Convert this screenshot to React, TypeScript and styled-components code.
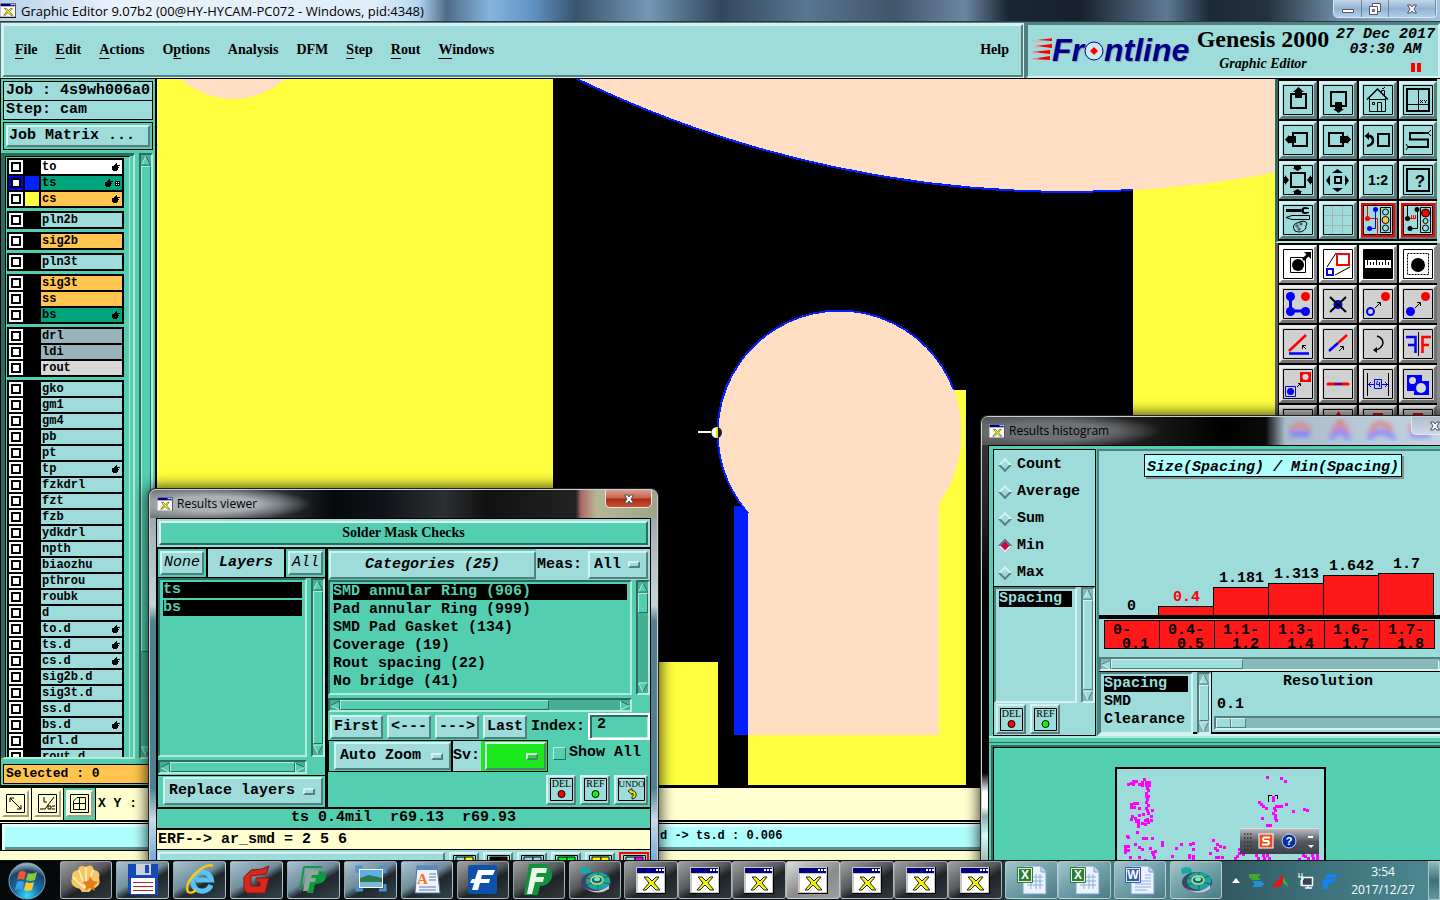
import React from "react";
import styled, { createGlobalStyle, css } from "styled-components";

/* ---------- palette ---------- */
const c = {
  cyan: "#9edbdb",
  cyanLight: "#d6f1f1",
  cyanDark: "#557f7f",
  cyanTrough: "#86b9b9",
  teal: "#54ceb0",
  tealLight: "#b4ecdc",
  tealDark: "#2c6c5e",
  tealTrough: "#47af96",
  cream: "#ffffcf",
  ice: "#b0ffff",
  orange: "#ffc54f",
  green: "#00a57e",
  yellow: "#ffff3f",
  peach: "#ffdec3",
  blue: "#0020ff",
  bar: "#ff1818",
};
const mono = `"Liberation Mono", monospace`;
const serif = `"Liberation Serif", serif`;
const sans = `"Open Sans", sans-serif`;

type Tone = "cyan" | "teal" | "grey" | "white" | "cream";
const tones: Record<Tone, { bg: string; hi: string; lo: string; trough: string }> = {
  cyan: { bg: c.cyan, hi: c.cyanLight, lo: c.cyanDark, trough: c.cyanTrough },
  teal: { bg: c.teal, hi: c.tealLight, lo: c.tealDark, trough: c.tealTrough },
  grey: { bg: "#d0d0d0", hi: "#ececec", lo: "#727272", trough: "#b0b0b0" },
  white: { bg: "#ffffff", hi: "#ffffff", lo: "#8a8a8a", trough: "#cccccc" },
  cream: { bg: c.cream, hi: "#ffffea", lo: "#a3a384", trough: "#dddd99" },
};
const raised = (t: Tone, w = 2) => css`
  background: ${tones[t].bg};
  border: ${w}px solid;
  border-color: ${tones[t].hi} ${tones[t].lo} ${tones[t].lo} ${tones[t].hi};
`;
const sunken = (t: Tone, w = 2) => css`
  background: ${tones[t].bg};
  border: ${w}px solid;
  border-color: ${tones[t].lo} ${tones[t].hi} ${tones[t].hi} ${tones[t].lo};
`;

const Global = createGlobalStyle`
  * { box-sizing: border-box; }
  body { margin: 0; background: #000; }
  button, input, select { font: inherit; color: inherit; margin: 0; padding: 0; border-radius: 0; }
  svg { display: block; }
`;

const Screen = styled.div`
  height: 100vh;
  overflow: hidden;
  display: flex;
  flex-direction: column;
  font: bold 15px/18px ${mono};
  color: #000;
`;
const Desktop = styled.div`
  position: relative;
  flex: 1;
  min-height: 0;
  overflow: hidden;
  display: flex;
  flex-direction: column;
  background: ${c.cream};
`;

/* ---------- title bar ---------- */
const TitleBar = styled.header`
  flex: none;
  height: 22px;
  display: flex;
  justify-content: space-between;
  background: linear-gradient(90deg, #b9d2ea 0, #e8f2fb 8%, #dfeefa 26%, #b6d6f2 29%, #4f6b88 31%, #86b4dc 34%, #5f93c4 37%, #39536c 40%, #7597b5 45%, #31485c 50%, #5a7690 56%, #40566a 62%, #6b86a0 67%, #1a2733 70%, #16212c 75%, #5e7a94 81%, #1c2a38 84%, #24323f 88%, #6f8ea8 93%, #a3c4e0 100%);
  border-bottom: 1px solid #2b3b46;
`;
const TitleText = styled.h1`
  display: flex;
  align-items: center;
  gap: 5px;
  margin: 0;
  font: 13px/20px ${sans};
`;
const CaptionButtons = styled.div`
  display: flex;
  height: 18px;
  margin-right: 3px;
  border: 1px solid #dbe9f5;
  border-top: 0;
  border-radius: 0 0 5px 5px;
  overflow: hidden;
  background: linear-gradient(#c3d6e8, #93b3d4 50%, #b0cfec);
`;
const CaptionButton = styled.button<{ $w: number }>`
  width: ${(p) => p.$w}px;
  border: 0;
  border-right: 1px solid #6b86a3;
  background: none;
  display: grid;
  place-items: center;
`;

/* ---------- header ---------- */
const Header = styled.div`
  flex: none;
  height: 57px;
  display: flex;
  background: ${c.cyanDark};
  border-top: 1px solid ${c.cyanDark};
  border-bottom: 1px solid #000;
`;
const MenuBar = styled.nav`
  flex: 1;
  margin: 1px 0 1px 2px;
  ${raised("cyan")}
  outline: 1px solid ${c.cyanLight};
  display: flex;
  align-items: center;
  gap: 18px;
  padding: 0 12px 2px 11px;
  font: bold 14px/18px ${serif};
`;
const MenuItem = styled.button`
  border: 0;
  background: none;
  white-space: nowrap;
  &:last-child {
    margin-left: auto;
  }
  u {
    text-underline-offset: 4px;
  }
`;
const Brand = styled.div`
  width: 414px;
  margin-left: 3px;
  ${sunken("cyan")}
  display: grid;
  grid-template-columns: 165px 140px 1fr;
`;
const LogoBox = styled.div`
  display: flex;
  align-items: center;
  padding: 0 0 2px 4px;
`;
const LogoText = styled.span`
  display: flex;
  align-items: center;
  font: italic bold 32px/36px "Liberation Sans", sans-serif;
  color: #00008b;
  text-shadow: 1px 1px 0 #9a9aa8;
`;
const Product = styled.div`
  text-align: center;
  white-space: nowrap;
  font: bold 24px/28px ${serif};
  small {
    display: block;
    font: italic bold 14px/22px ${serif};
  }
`;
const Clock = styled.div`
  text-align: center;
  white-space: nowrap;
  font: italic bold 15px/15px ${mono};
  padding-top: 2px;
`;
const Pause = styled.div`
  width: 10px;
  height: 9px;
  margin: 6px 17px 0 auto;
  border: solid red;
  border-width: 0 4px;
`;

/* ---------- body ---------- */
const Body = styled.div`
  flex: 1;
  min-height: 0;
  display: grid;
  grid-template-columns: 157px minmax(0, 1fr) 165px;
  background: ${c.teal};
`;
const Side = styled.aside`
  min-height: 0;
  display: flex;
  flex-direction: column;
  padding: 2px 2px 0 3px;
  border-left: 1px solid #000;
  border-right: 2px solid #000;
`;
const InfoBox = styled.div`
  height: 20px;
  margin: 0 0 -1px -1px;
  border: 1px solid #000;
  background: ${c.cyan};
  padding-left: 2px;
  white-space: nowrap;
`;
const MatrixFrame = styled.div`
  margin: 3px 0 3px -1px;
  border: 1px solid #000;
  padding: 2px;
`;
const WideButton = styled.button`
  ${raised("cyan")}
  width: 100%;
  height: 22px;
  text-align: left;
  padding-left: 1px;
`;
const LayerArea = styled.div`
  flex: 1;
  min-height: 0;
  display: flex;
  gap: 4px;
  margin-left: -3px;
`;
const LayerFrame = styled.div`
  flex: 1;
  min-width: 0;
  overflow: hidden;
  border-left: 4px solid ${c.tealDark};
  border-top: 3px solid ${c.tealDark};
  border-right: 2px solid ${c.tealLight};
  border-bottom: 2px solid ${c.tealLight};
`;
const LayerList = styled.div`
  height: 100%;
  margin-right: 3px;
  padding: 1px 1px 0;
  border: 1px solid #000;
  border-bottom: 0;
  border-right: 1px solid ${c.tealLight};
  overflow: hidden;
`;
const LayerGroup = styled.div`
  background: #000;
  padding: 2px;
  margin-bottom: 3px;
  display: grid;
  row-gap: 2px;
  width: 117px;
`;
const LayerRow = styled.label`
  display: grid;
  grid-template-columns: 14px 14px 1fr;
  column-gap: 2px;
  height: 14px;
  font: bold 12px/14px ${mono};
`;
const LayerCheck = styled.input<{ $on?: boolean }>`
  appearance: none;
  width: 14px;
  height: 14px;
  background: #fff;
  border: 2px solid ${(p) => (p.$on ? "#0000f0" : "#fff")};
  outline: 2px solid #000;
  outline-offset: -4px;
`;
const Swatch = styled.span<{ $color?: string }>`
  background: ${(p) => p.$color || "#000"};
`;
const LayerName = styled.span<{ $bg: string }>`
  background: ${(p) => p.$bg};
  display: flex;
  align-items: center;
  justify-content: space-between;
  padding: 0 2px 0 1px;
  height: 14px;
`;
const Marks = styled.span`
  display: flex;
  gap: 2px;
`;
const Selected = styled.div`
  flex: none;
  height: 20px;
  margin: 5px -2px 1px -1px;
  border: 1px solid #000;
  background: ${c.orange};
  padding-left: 2px;
  font: bold 13px/17px ${mono};
`;
const Tools = styled.div`
  min-height: 0;
  overflow: hidden;
  background: #5c5c5c;
`;
const ToolGrid = styled.div<{ $grey?: boolean }>`
  display: grid;
  grid-template-columns: repeat(4, 38px);
  gap: 2px;
  background: #000;
  padding: 2px 0 2px 1px;
  border-left: 3px solid ${(p) => (p.$grey ? "#5c5c5c" : c.tealDark)};
  border-right: 3px solid ${(p) => (p.$grey ? "#8a8a8a" : c.tealLight)};
  border-bottom: ${(p) => (p.$grey ? "0" : `2px solid ${c.tealLight}`)};
`;
const ToolButton = styled.button<{ $tone: Tone; $hot?: boolean }>`
  ${(p) => raised(p.$tone, p.$hot ? 2 : 3)}
  height: 38px;
  display: grid;
  place-items: center;
  ${(p) => p.$hot && css`box-shadow: inset 0 0 0 2px red;`}
`;

/* ---------- lower strips ---------- */
const CoordStrip = styled.div`
  flex: none;
  height: 37px;
  display: flex;
  align-items: center;
  border-top: 3px solid #000;
  border-bottom: 2px solid #000;
  background: ${c.cream};
  font: bold 13px/16px ${mono};
`;
const CoordCell = styled.div<{ $on?: boolean }>`
  width: 32px;
  height: 32px;
  padding: 2px;
  background: ${(p) => (p.$on ? c.teal : c.cream)};
  border-right: 1px solid #000;
`;
const CoordText = styled.span`
  padding-left: 2px;
`;
const CoordButton = styled.button`
  ${raised("cream")}
  width: 27px;
  height: 27px;
  display: grid;
  place-items: center;
`;
const MessageStrip = styled.div`
  flex: none;
  height: 38px;
  padding: 1px 0 8px;
  background: ${c.cream};
`;
const Message = styled.div`
  height: 28px;
  border: 1px solid #000;
  border-width: 1px 0 1px 2px;
  background: ${c.ice};
  box-shadow: inset 3px 3px 0 #ddffff, inset 0 -3px 0 #5f8f8f;
  font: bold 12px/25px ${mono};
  padding-left: 658px;
`;

/* ---------- windows ---------- */
const Win = styled.section<{ $x: number; $y: number; $w: number; $dark?: boolean }>`
  position: absolute;
  left: ${(p) => p.$x}px;
  top: ${(p) => p.$y}px;
  width: ${(p) => p.$w}px;
  padding: 0 6px;
  border: 1px solid #c9d0d0;
  border-radius: 7px 7px 0 0;
  box-shadow: 0 0 0 1px #222, 0 0 14px 3px rgba(0, 0, 0, 0.7);
  background: ${(p) =>
    p.$dark
      ? "linear-gradient(#3b3b3b, #222 20%, #000 36%, #050505 74%, #fff 78%, #fff 81%, #8aa 83%, #cff 87%, #555 100%)"
      : "linear-gradient(#8b9496, #a9b7bd 12%, #c6d6da 29%, #547f8e 33%, #4f7f93 75%, #c8dcee 83%, #5c9fd4 96%)"};
`;
const WinTitle = styled.div<{ $bg: string }>`
  position: relative;
  height: 28px;
  margin: 0 -6px;
  padding: 0 5px 0 7px;
  border-radius: 6px 6px 0 0;
  background: ${(p) => p.$bg};
  overflow: hidden;
  display: flex;
  align-items: center;
  gap: 4px;
  font: 12px/20px ${sans};
  h2 {
    margin: 0;
    font: inherit;
  }
`;
const WinClose = styled.button<{ $red?: boolean }>`
  position: relative;
  align-self: flex-start;
  margin-left: auto;
  width: 47px;
  height: 18px;
  border: 1px solid #e7e7ef;
  border-top: 0;
  border-radius: 0 0 5px 5px;
  background: ${(p) =>
    p.$red ? "linear-gradient(#d9a18f, #c7614a 48%, #ab2a10 52%, #cc4d33)" : "linear-gradient(#aebccb, #cdd9e8)"};
  display: grid;
  place-items: center;
`;
const TitleBlur = styled.svg`
  position: absolute;
  left: 296px;
  top: 0;
`;

/* ---------- shared widgets ---------- */
const MButton = styled.button<{ $italic?: boolean; $plain?: boolean; $w?: number; $h?: number }>`
  ${raised("cyan")}
  ${(p) => p.$w && css`width: ${p.$w}px;`}
  height: ${(p) => p.$h || 24}px;
  white-space: nowrap;
  line-height: 18px;
  font-style: ${(p) => (p.$italic ? "italic" : "normal")};
  font-weight: ${(p) => (p.$plain ? 400 : 700)};
`;
const IconButton = styled.button<{ $wide?: boolean; $hot?: boolean }>`
  ${raised("cyan")}
  ${(p) => p.$hot && css`border-color: red;`}
  width: ${(p) => (p.$wide ? 34 : 30)}px;
  height: 30px;
  flex: none;
  display: grid;
  place-items: center;
`;
const OptionBox = styled.label<{ $w: number; $green?: boolean }>`
  ${raised("cyan")}
  ${(p) => p.$green && css`background: #1ae81a;`}
  width: ${(p) => p.$w}px;
  height: 28px;
  display: flex;
  align-items: center;
  padding: 0 6px 0 4px;
`;
const Select = styled.select`
  appearance: none;
  flex: 1;
  min-width: 0;
  border: 0;
  background: transparent;
  line-height: 20px;
`;
const Tab = styled.i<{ $green?: boolean }>`
  ${raised("cyan")}
  ${(p) => p.$green && css`background: #1ae81a;`}
  width: 12px;
  height: 7px;
`;
const List = styled.ul<{ $tone: Tone }>`
  ${(p) => sunken(p.$tone)}
  list-style: none;
  margin: 0;
  padding: 2px 3px;
  flex: 1;
  min-width: 0;
  overflow: hidden;
`;
const ListItem = styled.li<{ $tone: Tone; $on?: boolean }>`
  height: 16px;
  margin-bottom: 2px;
  line-height: 16px;
  white-space: pre;
  ${(p) => p.$on && css`background: #000; color: ${tones[p.$tone].bg};`}
`;
const Bar = styled.div<{ $tone: Tone; $v?: boolean }>`
  ${(p) => sunken(p.$tone)}
  background: ${(p) => tones[p.$tone].trough};
  display: flex;
  flex-direction: ${(p) => (p.$v ? "column" : "row")};
  flex: none;
  ${(p) => (p.$v ? "width: 14px;" : "height: 14px;")}
`;
const Thumb = styled.div<{ $tone: Tone; $size: string }>`
  ${(p) => raised(p.$tone, 1)}
  flex: ${(p) => (p.$size === "full" ? "1" : `0 0 ${p.$size}`)};
`;
const Gap = styled.div`
  flex: 1;
`;
const ArrowSvg = styled.svg`
  flex: none;
`;

function Arrow({ dir, tone }: { dir: "up" | "down" | "left" | "right"; tone: Tone }) {
  const t = tones[tone];
  const rot = { up: 0, right: 90, down: 180, left: 270 }[dir];
  const flip = dir === "down" || dir === "right";
  return (
    <ArrowSvg width="10" height="11" viewBox="0 0 10 11">
      <g transform={`rotate(${rot} 5 5.5)`}>
        <path d="M5 1L9.500 10H.5Z" fill={t.bg} />
        <path d="M5 1L.5 10" stroke={flip ? t.lo : t.hi} fill="none" />
        <path d="M5 1L9.500 10H.5" stroke={flip ? t.hi : t.lo} fill="none" />
      </g>
    </ArrowSvg>
  );
}
function ScrollBar({ tone, v, size }: { tone: Tone; v?: boolean; size: string }) {
  return (
    <Bar $tone={tone} $v={v}>
      <Arrow dir={v ? "up" : "left"} tone={tone} />
      <Thumb $tone={tone} $size={size} />
      {size !== "full" && <Gap />}
      <Arrow dir={v ? "down" : "right"} tone={tone} />
    </Bar>
  );
}
function OptionMenu({ text, w, green, name }: { text: string; w: number; green?: boolean; name: string }) {
  return (
    <OptionBox $w={w} $green={green}>
      <Select aria-label={name}>
        <option>{text}</option>
      </Select>
      <Tab $green={green} />
    </OptionBox>
  );
}

/* ---------- icons ---------- */
const XIcon = ({ w = 30 }: { w?: number }) => (
  <svg width={w} height={w * 0.9} viewBox="0 0 30 27">
    <path d="M0 0H31V28H0Z" fill="#000" />
    <path d="M0 0H29V26H0Z" fill="#c8c8c8" />
    <path d="M1 1H28V6H1Z" fill="#00007f" />
    <path d="M20 2h2v2h-2zM23 2h2v2h-2zM26 2h2v2h-2z" fill="#fff" />
    <path d="M2 7H28V25H2Z" fill="#fff" />
    <path d="M8 10h4l4 4 4-4h3l-5 6 6 7h-4l-5-5-5 5H7l6-7Z" fill="#f4f400" stroke="#222" />
  </svg>
);
const CloseX = ({ light }: { light?: boolean }) => (
  <svg width="12" height="10" viewBox="0 0 12 10">
    <path d="M1.500 1h3L6 3l1.500-2h3L8 5l2.500 4h-3L6 7 4.500 9h-3L4 5Z" fill={light ? "#fff" : "#f4f6f8"} stroke="#4a5260" />
  </svg>
);
const Hand = () => (
  <svg width="8" height="8" viewBox="0 0 8 8">
    <path d="M4 0h1v2h3v1H6v1h1v1H6v2H5v1H1V7H0V3h2V2h1V1h1z" />
  </svg>
);
const GridMark = () => (
  <svg width="5" height="8" viewBox="0 0 5 8">
    <path d="M0 2h5v5H0z" />
    <path d="M1 3h1v1H1zM3 3h1v1H3zM1 5h1v1H1zM3 5h1v1H3z" fill="#fff" />
  </svg>
);

const blk = "#000";
const upHead = "M15.500 2L21 7H19V13H12V7H10Z";
const topIcons: { hot?: boolean; el: React.ReactNode }[] = [
  { el: <><path d="M8 9H23V23H8Z" fill="none" stroke={blk} strokeWidth="2" /><path d={upHead} /></> },
  { el: <><path d="M8 7H23V21H8Z" fill="none" stroke={blk} strokeWidth="2" /><path d="M15.500 28L10 24H12V17H19V24H21Z" /></> },
  { el: <g fill="none" stroke={blk}><path d="M4 14.500L14.500 4L25 14.500" strokeWidth="1.500" /><path d="M6.500 13V26.500H22.500V13M6.500 14.500H22.500M9.500 17.500H11.500V19.500H9.500ZM14.500 26V17.500H18.500V26M18.500 8V5.500H21.500V11M19 3.500H21M21 2.500H22" /></g> },
  { el: <><path d="M4 4H26V26H4Z" fill="none" stroke={blk} strokeWidth="2" /><path d="M15.500 4V26M4 19.500H26" stroke={blk} fill="none" /><path d="M17 15L20 18M20 15L17 18M21 15L22.500 16.500L24 15M22.500 16.500V18" stroke={blk} fill="none" /></> },
  { el: <><path d="M10 8H24V21H10Z" fill="none" stroke={blk} strokeWidth="2" /><path d="M2 14.500L6 10V11H13V18H6V19Z" /></> },
  { el: <><path d="M6 8H20V21H6Z" fill="none" stroke={blk} strokeWidth="2" /><path d="M28 14.500L24 10V11H17V18H24V19Z" /></> },
  { el: <><path d="M15 9H26V21H15Z" fill="none" stroke={blk} strokeWidth="2" /><path d="M5 11H7Q10 12 10 15.500Q10 20 4 21" fill="none" stroke={blk} strokeWidth="2.500" /><path d="M1.500 11L6 7V15Z" /></> },
  { el: <g fill="none" stroke={blk}><path d="M25 8H7V14.500H25V22H5" strokeWidth="2" /><path d="M25 8L28 5M25 8L28 11M5 22L3 19M5 22L3 25" /></g> },
  { el: <><path d="M8 8H22V22H8Z" fill="none" stroke={blk} strokeWidth="2" /><path d="M11 1V3H9.500L14.500 6L19.500 3H18V1ZM11 29V27H9.500L14.500 24L19.500 27H18V29ZM1 12H2V10L6 15L2 20V18H1ZM29 12H28V10L24 15L28 20V18H29Z" /></> },
  { el: <><path d="M12 12H18V18H12Z" fill="none" stroke={blk} strokeWidth="2" /><path d="M9 8H20L14.500 4ZM9 23H20L14.500 27ZM7 10V21L3 15.500ZM22 10V21L26 15.500Z" /></> },
  { el: <text x="15" y="20" textAnchor="middle" fontFamily="Liberation Sans" fontSize="14" fontWeight="bold">1:2</text> },
  { el: <><path d="M4 4H26V26H4Z" fill="none" stroke={blk} strokeWidth="2" /><text x="17" y="22" textAnchor="middle" fontFamily="Liberation Sans" fontSize="17" fontWeight="bold">?</text></> },
  { el: <><path d="M3 4H18V7H3Z" /><path d="M26 3Q19 0 18 5.500Q19 11 26 8V7H21V4H26Z" /><path d="M3 12.500L9 10.500H26.500V14.500H9Z" fill="none" stroke={blk} /><path d="M12 26Q8 20 14 18Q23 14 24 19Q22 21 23 23Q19 29 12 26Z" fill="none" stroke={blk} /><circle cx="14" cy="21" r="1.200" fill="none" stroke={blk} strokeWidth=".7" /><circle cx="18" cy="19" r="1.200" fill="none" stroke={blk} strokeWidth=".7" /><circle cx="16" cy="24" r="1.200" fill="none" stroke={blk} strokeWidth=".7" /></> },
  { el: <path d="M9.500 1V29M19.500 1V29M1 10.500H29M1 20.500H29" stroke="#a9b3b3" fill="none" /> },
  { hot: true, el: <><path d="M4.500 1V13.500H14.500V29" stroke="red" fill="none" /><circle cx="4.500" cy="13.500" r="2.500" fill="red" /><path d="M12.500 5V23.500H6" stroke="#00f" fill="none" /><circle cx="12.500" cy="4.500" r="2.500" fill="#00f" /><circle cx="6.500" cy="23.500" r="2.500" fill="#00f" /><path d="M17.500 2.500H27.500V27.500H17.500Z" fill="none" stroke={blk} /><circle cx="22.500" cy="7" r="3" fill="none" stroke={blk} /><circle cx="22.500" cy="15" r="3.500" fill={c.orange} stroke={blk} /><circle cx="22.500" cy="23" r="3" fill="none" stroke={blk} /></> },
  { hot: true, el: <><path d="M4.500 1V13M14.500 5V23.500H8" stroke={blk} fill="none" /><circle cx="4.500" cy="13.500" r="2.500" /><circle cx="14" cy="4.500" r="2.500" /><circle cx="7" cy="23.500" r="2.500" /><path d="M7 13.500H13M8.500 10V13M10.500 10V13M12.500 10V13" stroke="red" fill="none" /><path d="M17.500 2.500H27.500V27.500H17.500Z" fill="none" stroke={blk} /><circle cx="22.500" cy="8" r="4" fill="red" stroke={blk} /><circle cx="22.500" cy="16" r="2.500" fill="none" stroke={blk} /><circle cx="22.500" cy="23" r="3" fill="none" stroke={blk} /></> },
];
const R = "#f00";
const B = "#00f";
const editIcons: React.ReactNode[] = [
  <><path d="M7.500 8.500H22.500V23.500H7.500Z" fill="none" stroke={blk} /><circle cx="15" cy="16" r="6" /><path d="M20 11L26 5" stroke={blk} strokeWidth="3" /><path d="M21 3H28V10Z" /></>,
  <><path d="M14 5H26V16H14Z" fill="none" stroke={R} strokeWidth="2" /><path d="M4 20H10V26H4Z" fill="none" stroke={B} strokeWidth="2" /><path d="M4 18L13 4M12 26L27 18" stroke={blk} fill="none" /></>,
  <><path d="M1 1H29V29H1Z" /><path d="M2 11H28V19H2Z" fill="#fff" /><path d="M4.500 14V19M7.500 16V19M10.500 16V19M13.500 14V19M16.500 16V19M19.500 16V19M22.500 14V19M25.500 16V19" stroke={blk} fill="none" transform="translate(0 -3)" /></>,
  <><path d="M4.500 4.500H25.500V25.500H4.500Z" fill="none" stroke={blk} strokeDasharray="2 1" /><circle cx="15" cy="16" r="7" /></>,
  <><path d="M7.500 7V22H22" fill="none" stroke={B} strokeWidth="3" /><circle cx="7.500" cy="7.500" r="4.500" fill={B} /><circle cx="7.500" cy="22.500" r="4.500" fill={B} /><circle cx="22.500" cy="22.500" r="4.500" fill={B} /><circle cx="22.500" cy="7.500" r="4.500" fill={R} /></>,
  <><circle cx="15" cy="15.500" r="4.500" fill={B} /><path d="M7 8L23 23M23 8L7 23" stroke={blk} strokeWidth="2" fill="none" /></>,
  <><circle cx="7.500" cy="22.500" r="3.500" fill="none" stroke={B} strokeWidth="2" /><circle cx="22.500" cy="7.500" r="4.500" fill={R} /><path d="M12 19L17.500 13.500M14 13.500H17.500V17" stroke={blk} fill="none" /></>,
  <><circle cx="7.500" cy="22.500" r="4.500" fill={B} /><circle cx="22.500" cy="7.500" r="4.500" fill={R} /><path d="M12 19L17.500 13.500M14 13.500H17.500V17" stroke={blk} fill="none" /></>,
  <><path d="M6 24.500H26" stroke={B} strokeWidth="2.500" /><path d="M6 22L23 6" stroke={R} strokeWidth="2.500" /><path d="M23 20L19.500 16.500M19.500 20V16.500H23" stroke={blk} fill="none" /></>,
  <><path d="M6 22L15 14" stroke={B} strokeWidth="2.500" /><path d="M15 14L24 6" stroke={R} strokeWidth="2.500" /><path d="M16 22L20 18M17 17.500H20.500V21" stroke={blk} fill="none" /></>,
  <><path d="M14 7Q20 9 20 14Q19 20 12 21" fill="none" stroke={blk} strokeWidth="1.500" /><path d="M10 21L14 18V24Z" /></>,
  <><path d="M15.500 3V27" stroke={blk} /><path d="M3 8H12.500V24M5 16H12.500" fill="none" stroke={B} strokeWidth="2.500" /><path d="M28 8H19.500V24M26 16H19.500" fill="none" stroke={R} strokeWidth="2.500" /></>,
  <><path d="M17 3H28V13H17Z" fill={R} /><circle cx="22.500" cy="8" r="3" fill="#d8d8d8" /><path d="M2.500 17.500H12.500V27.500H2.500Z" fill="none" stroke={B} /><circle cx="7.500" cy="22.500" r="3.500" fill={B} /><path d="M14 18L17 15M15 14.500H17.500V17" stroke={blk} fill="none" /></>,
  <><path d="M5 15H25" stroke={R} strokeWidth="3" strokeLinecap="round" /><path d="M12 15H19" stroke={B} strokeWidth="2" /></>,
  <><path d="M4.500 4V27M25.500 4V27" stroke={blk} /><path d="M11.500 10.500H18.500V19.500H11.500ZM5 15.500H11M19 15.500H25M8 13L5.500 15.500L8 18M22 13L24.500 15.500L22 18M14.500 12L13.500 15.500H17M16.500 13V18" stroke={B} fill="none" /></>,
  <><path d="M4 6H19V22H4Z" fill={B} /><path d="M11 12H26V26H11Z" fill={B} /><circle cx="9.500" cy="11.500" r="3.500" fill="#d8d8d8" /><circle cx="18" cy="19" r="5" fill="#d8d8d8" /></>,
  <path d="M9 14L15 11L21 14" stroke={B} fill="none" strokeWidth="2" />,
  <path d="M13 8L15.500 4L18 8" stroke={R} fill="none" strokeWidth="2" />,
  <path d="M10 5H20" stroke={R} strokeWidth="2" />,
  <path d="M10 5H20" stroke={R} strokeWidth="2" />,
];
const Icon30 = ({ children }: { children: React.ReactNode }) => (
  <svg width="30" height="30" viewBox="0 0 30 30">
    <path d="M.5.5H29.500V29.500H.5Z" fill="none" stroke={blk} />
    {children}
  </svg>
);
function MiniIcon({ text, dot }: { text: string; dot?: string }) {
  const w = dot ? 23 : 27;
  return (
    <svg width={w} height="23" viewBox={`0 0 ${w} 23`}>
      <path d={`M.5.5H${w - 0.5}V22.500H.5Z`} fill="none" stroke={blk} />
      <text x={w / 2} y="9" textAnchor="middle" fontFamily="Liberation Serif" fontSize={dot ? 10 : 9} fontWeight="normal">
        {text}
      </text>
      {dot ? (
        <circle cx="11.500" cy="16" r="3.500" fill={dot} stroke={blk} />
      ) : (
        <path d="M10 13L14 10.500V12.500Q19 13 18 18Q17 21 14 21V18.500Q16 18 15 15.500H14V16.500Z" fill="#e8e000" stroke={blk} strokeWidth=".8" />
      )}
    </svg>
  );
}

/* ---------- layer data ---------- */
type Layer = { n: string; bg?: string; sw?: string; hand?: boolean; grid?: boolean; on?: boolean };
const L = (n: string, o: Partial<Layer> = {}): Layer => ({ n, ...o });
const layerGroups: Layer[][] = [
  [L("to", { bg: "#fff", hand: true }), L("ts", { bg: c.green, sw: c.blue, hand: true, grid: true, on: true }), L("cs", { bg: c.orange, sw: c.yellow, hand: true })],
  [L("pln2b")],
  [L("sig2b", { bg: c.orange })],
  [L("pln3t")],
  [L("sig3t", { bg: c.orange }), L("ss", { bg: c.orange }), L("bs", { bg: c.green, hand: true })],
  [L("drl", { bg: "#9bb3bd" }), L("ldi", { bg: "#9bb3bd" }), L("rout", { bg: "#d8d8d8" })],
  [
    ..."gko gm1 gm4 pb pt".split(" ").map((n) => L(n)),
    L("tp", { hand: true }),
    ..."fzkdrl fzt fzb ydkdrl npth biaozhu pthrou roubk d".split(" ").map((n) => L(n)),
    ..."to.d ts.d cs.d".split(" ").map((n) => L(n, { hand: true })),
    ..."sig2b.d sig3t.d ss.d".split(" ").map((n) => L(n)),
    L("bs.d", { hand: true }),
    L("drl.d"),
    L("rout.d"),
  ],
];

function Board() {
  return (
    <svg width="100%" height="100%" viewBox="157 79 1118 706" preserveAspectRatio="xMinYMin slice" shapeRendering="crispEdges">
      <path d="M157 79H1275V785H157Z" />
      <path d="M157 79H553V785H157ZM553 662H718V785H553ZM1133 79H1275V785H1133ZM748 390H966V785H748Z" fill={c.yellow} />
      <circle cx="233" cy="21" r="78" fill={c.peach} />
      <circle cx="1067" cy="-935" r="1127" fill={c.peach} />
      <path d="M553 67A1127 1127 0 0 0 1133 190" fill="none" stroke={c.blue} strokeWidth="2" />
      <path d="M734 506H748V735H734Z" fill={c.blue} />
      <circle cx="839.500" cy="432.500" r="122" fill={c.peach} />
      <path d="M748 500H939V735H748Z" fill={c.peach} />
      <path d="M748 513.200A122 122 0 1 1 953.900 390" fill="none" stroke={c.blue} strokeWidth="2" />
      <path d="M698 431H712V433H698Z" fill="#fff" />
      <g shapeRendering="auto">
        <circle cx="716.500" cy="432.500" r="5.500" fill="#0a2038" />
        <path d="M717 427A5.500 5.500 0 0 0 717 438Z" fill="#fff" />
        <path d="M716 427H718V438H716Z" fill="#ffd800" />
      </g>
    </svg>
  );
}

/* ---------- results viewer ---------- */
const Pane = styled.div`
  border: 1px solid #000;
  background: ${c.teal};
`;
const Banner = styled.div`
  padding: 2px;
  background: ${c.cyan};
  border-bottom: 2px solid #000;
  div {
    ${sunken("teal")}
    border-color: ${c.cyanLight} ${c.tealDark} ${c.tealDark} ${c.cyanLight};
    height: 24px;
    text-align: center;
    font: bold 14px/20px ${serif};
  }
`;
const Cols = styled.div`
  display: grid;
  grid-template-columns: 168px 1fr;
  border-bottom: 2px solid #000;
`;
const ColLeft = styled.div`
  border-right: 3px solid #000;
  border-left: 1px solid #000;
  margin-right: -3px;
  display: flex;
  flex-direction: column;
`;
const ColRight = styled.div`
  margin-left: 3px;
  display: flex;
  flex-direction: column;
`;
const Heads = styled.div`
  display: grid;
  grid-template-columns: 48px 1fr 39px;
  border-bottom: 1px solid #000;
  height: 29px;
  button {
    margin: 2px;
  }
  h3 {
    margin: 0;
    background: ${c.cyan};
    border: 1px solid #000;
    border-width: 0 2px;
    text-align: center;
    font: italic bold 15px/28px ${mono};
  }
`;
const Scrolled = styled.div<{ $h: number }>`
  display: flex;
  gap: 4px;
  height: ${(p) => p.$h}px;
`;
const HScroll = styled.div`
  margin: 3px 18px 1px 0;
`;
const OptionRow = styled.div`
  border-top: 1px solid #000;
  padding: 1px 0 2px 5px;
`;
const CatRow = styled.div`
  display: flex;
  align-items: center;
  height: 31px;
  padding-left: 1px;
`;
const Meas = styled.div`
  flex: 1;
  align-self: stretch;
  background: ${c.cyan};
  display: flex;
  align-items: center;
  justify-content: space-between;
  padding: 0 2px 0 1px;
`;
const NavRow = styled.div`
  display: flex;
  align-items: center;
  height: 27px;
  gap: 4px;
  padding-left: 2px;
`;
const IndexLabel = styled.label`
  flex: 1;
  display: flex;
  align-items: center;
  justify-content: space-between;
`;
const IndexInput = styled.input`
  width: 62px;
  height: 27px;
  padding: 0 0 4px 7px;
  background: ${c.teal};
  border: 2px solid #fff;
  box-shadow: inset 2px 2px 0 ${c.tealDark}, inset -1px -1px 0 ${c.tealLight};
`;
const ZoomRow = styled.div`
  display: flex;
  height: 32px;
`;
const Boxed = styled.div`
  border: 1px solid #000;
  padding-left: 5px;
  display: flex;
  align-items: center;
`;
const SvBox = styled.div`
  border: 1px solid #000;
  background: #1ae81a;
  display: flex;
  align-items: center;
  padding-right: 1px;
  span {
    align-self: stretch;
    width: 28px;
    margin-right: 4px;
    background: ${c.cyan};
    line-height: 30px;
  }
`;
const CheckLabel = styled.label`
  display: flex;
  align-items: center;
  gap: 3px;
  height: 26px;
  margin-left: 5px;
  input {
    appearance: none;
    width: 13px;
    height: 13px;
    ${raised("teal", 1)}
  }
`;
const IconRow = styled.div`
  flex: 1;
  display: flex;
  justify-content: flex-end;
  align-items: center;
  gap: 4px;
  padding-right: 2px;
`;
const StatusLine = styled.div`
  height: 21px;
  text-align: center;
  white-space: pre;
  border-bottom: 2px solid #000;
`;
const Erf = styled.div`
  height: 20px;
  background: ${c.cream};
  padding-left: 1px;
  border-bottom: 1px solid #000;
  font: bold 15px/19px ${mono};
`;
const FootBar = styled.div`
  display: flex;
  gap: 4px;
  padding: 2px 1px 0;
  background: ${c.cyan};
  height: 36px;
  & > :first-child {
    flex: 1;
    ${raised("cyan")}
  }
`;
const FootIcon = ({ a, b }: { a: string; b: string }) => (
  <svg width="23" height="24" viewBox="0 0 23 24">
    <path d="M.5.5H22.500V22.500H.5Z" fill="none" stroke={blk} />
    <path d="M3 2H12V20H3Z" fill={a} stroke={blk} />
    <path d="M12 2H20V20H12Z" fill={b} stroke={blk} />
  </svg>
);
const footColors = [["#9edbdb", "#ff0"], ["#000", "#300"], ["#9edbdb", "#9edbdb"], ["#0f0", "#0f0"], ["#ff0", "#ff0"], ["#9edbdb", "#f0f"]];

function ResultsViewer() {
  const cats = ["SMD annular Ring (906)", "Pad annular Ring (999)", "SMD Pad Gasket (134)", "Coverage (19)", "Rout spacing (22)", "No bridge (41)"];
  return (
    <Win $x={149} $y={489} $w={509}>
      <WinTitle $bg="radial-gradient(ellipse 100px 17px at 62px 14px, #a9b1b4 45%, transparent), linear-gradient(90deg, #777 0, #33383b 24%, #06090c 36%, #101317 46%, #2c3033 58%, #111 66%, #222 84%, #a66 85%, #b5b795 88%, #9fa38a 100%)">
        <XIcon w={16} />
        <h2>Results viewer</h2>
        <WinClose $red aria-label="Close"><CloseX light /></WinClose>
      </WinTitle>
      <Pane>
        <Banner><div>Solder Mask Checks</div></Banner>
        <Cols>
          <ColLeft>
            <Heads>
              <MButton $italic $plain>None</MButton>
              <h3>Layers</h3>
              <MButton $italic $plain>All</MButton>
            </Heads>
            <Scrolled $h={179}>
              <List $tone="teal">
                <ListItem $tone="teal" $on>ts</ListItem>
                <ListItem $tone="teal" $on>bs</ListItem>
              </List>
              <ScrollBar tone="teal" v size="full" />
            </Scrolled>
            <HScroll><ScrollBar tone="teal" size="full" /></HScroll>
            <OptionRow><OptionMenu name="Layer mode" text="Replace layers" w={160} /></OptionRow>
          </ColLeft>
          <ColRight>
            <CatRow>
              <MButton $italic $w={207} $h={28}>Categories (25)</MButton>
              <Meas>Meas: <OptionMenu name="Measurement" text="All" w={60} /></Meas>
            </CatRow>
            <Scrolled $h={115}>
              <List $tone="teal">
                {cats.map((t, i) => <ListItem key={t} $tone="teal" $on={i === 0}>{t}</ListItem>)}
              </List>
              <ScrollBar tone="teal" v size="20px" />
            </Scrolled>
            <HScroll><ScrollBar tone="teal" size="209px" /></HScroll>
            <NavRow>
              <MButton $w={53}>First</MButton>
              <MButton $w={44}>&lt;---</MButton>
              <MButton $w={44}>---&gt;</MButton>
              <MButton $w={44}>Last</MButton>
              <IndexLabel>Index:<IndexInput defaultValue="2" /></IndexLabel>
            </NavRow>
            <ZoomRow>
              <Boxed><OptionMenu name="Zoom mode" text="Auto Zoom" w={117} /></Boxed>
              <SvBox><span>Sv:</span><OptionMenu name="Severity" text="" w={61} green /></SvBox>
              <CheckLabel><input type="checkbox" />Show All</CheckLabel>
            </ZoomRow>
            <IconRow>
              <IconButton aria-label="Delete"><MiniIcon text="DEL" dot="#f00" /></IconButton>
              <IconButton aria-label="Refresh"><MiniIcon text="REF" dot="#0f0" /></IconButton>
              <IconButton $wide aria-label="Undo"><MiniIcon text="UNDO" /></IconButton>
            </IconRow>
          </ColRight>
        </Cols>
        <StatusLine>{"ts 0.4mil  r69.13  r69.93"}</StatusLine>
        <Erf>ERF--&gt; ar_smd = 2 5 6</Erf>
        <FootBar>
          <div />
          {footColors.map(([a, b], i) => (
            <IconButton key={i} $hot={i === 5} aria-label={`Display ${i + 1}`}><FootIcon a={a} b={b} /></IconButton>
          ))}
        </FootBar>
      </Pane>
    </Win>
  );
}

/* ---------- histogram ---------- */
const HistPane = styled.div`
  background: ${c.teal};
  border: 1px solid #000;
  padding: 3px 6px 0 4px;
`;
const HistTop = styled.div`
  display: grid;
  grid-template-columns: 103px 1fr;
  column-gap: 1px;
  height: 287px;
`;
const HistSide = styled.div`
  border: 1px solid #000;
  background: ${c.cyan};
  display: flex;
  flex-direction: column;
`;
const Radios = styled.fieldset`
  margin: 0;
  padding: 1px 0 0 4px;
  border: 0;
  border-bottom: 1px solid #000;
  height: 137px;
`;
const Radio = styled.label`
  display: flex;
  align-items: center;
  gap: 5px;
  height: 27px;
  input {
    appearance: none;
    width: 10px;
    height: 10px;
    margin: 0 2px;
    transform: rotate(45deg);
    border: 2px solid;
    border-color: ${c.cyanLight} ${c.cyanDark} ${c.cyanDark} ${c.cyanLight};
  }
  input:checked {
    background: #d4004c;
    border-color: ${c.cyanDark} ${c.cyanLight} ${c.cyanLight} ${c.cyanDark};
  }
`;
const SideButtons = styled.div`
  flex: 1;
  display: flex;
  gap: 4px;
  padding: 1px 2px;
`;
const Chart = styled.div`
  border: 2px solid ${c.cyanDark};
  border-right: 0;
  border-bottom: 2px solid ${c.cyanLight};
  background: ${c.cyan};
  display: flex;
  flex-direction: column;
`;
const ChartTitle = styled.div`
  align-self: center;
  margin: 3px 3px 0 0;
  height: 23px;
  padding: 0 2px;
  border: 1px solid #000;
  background: ${c.ice};
  box-shadow: 2px 2px 0 #7c8f8f;
  font: italic bold 15px/25px ${mono};
`;
const Bars = styled.div`
  flex: 1;
  display: flex;
  align-items: flex-end;
  padding-left: 5px;
  border-bottom: 4px solid #000;
  font: bold 15px/16px ${mono};
`;
const BarCol = styled.div<{ $red?: boolean }>`
  width: 55px;
  text-align: center;
  color: ${(p) => (p.$red ? "#f00" : "#000")};
`;
const BarRect = styled.div`
  background: ${c.bar};
  border: 1px solid #000;
  border-width: 1px 1px 0 0;
  box-shadow: -1px 0 0 #000;
`;
const Ranges = styled.div`
  display: flex;
  margin: 1px 0 8px 5px;
  font: bold 15px/14px ${mono};
`;
const Range = styled.div`
  width: 55px;
  height: 29px;
  border: 1px solid #000;
  border-right-width: 0;
  background: ${c.bar};
  padding: 3px 0 0 8px;
  white-space: pre;
  &:last-child {
    width: 56px;
    border-right-width: 1px;
  }
`;
const Lower = styled.div`
  display: grid;
  grid-template-columns: 113px 1fr;
  height: 63px;
  border-top: 1px solid #000;
  border-bottom: 2px solid #000;
`;
const LowerList = styled.div`
  display: flex;
  gap: 4px;
  border-right: 1px solid #000;
`;
const Resolution = styled.label`
  display: flex;
  flex-direction: column;
  padding: 1px 8px 0 2px;
  text-align: center;
  b {
    text-align: left;
    margin-top: 5px;
    padding-left: 3px;
  }
  input {
    appearance: none;
    margin-top: 2px;
    height: 14px;
    width: 100%;
    ${sunken("cyan")}
    background: ${c.cyanTrough};
  }
  input::-webkit-slider-thumb {
    appearance: none;
    width: 30px;
    height: 10px;
    border: 1px solid;
    border-color: ${c.cyanLight} ${c.cyanDark} ${c.cyanDark} ${c.cyanLight};
    background: linear-gradient(90deg, ${c.cyan} 13px, ${c.cyanDark} 13px, ${c.cyanDark} 14px, ${c.cyanLight} 14px, ${c.cyanLight} 15px, ${c.cyan} 15px);
  }
`;
const Sash = styled.div`
  height: 7px;
  margin-left: -4px;
  border-bottom: 1px solid ${c.tealDark};
  border-top: 2px solid ${c.tealLight};
`;
const MapPane = styled.div`
  height: 150px;
  margin-top: 4px;
  border: 1px solid #000;
  box-shadow: -2px -2px 0 ${c.tealDark};
  padding: 19px 0 0 121px;
`;
const MapBox = styled.div`
  width: 211px;
  height: 140px;
  border: 2px solid #000;
  background: ${c.cyan};
`;

const mapDots = "10,14 13,13 15,11 18,11 15,14 21,14 24,12 26,9 28,12 31,12 31,15 28,15 24,15 29,18 30,20 28,23 28,26 30,26 29,29 28,32 30,35 28,38 13,34 16,33 19,33 13,37 16,37 21,38 29,40 34,40 30,43 25,44 21,45 14,46 13,49 17,48 20,50 27,50 29,49 33,46 33,50 20,53 24,53 27,54 20,56 30,52 18,51 19,62 9,66 10,67 25,68 28,68 34,68 17,74 21,77 24,79 32,78 44,72 44,75 7,76 10,76 7,79 10,80 7,82 34,82 37,81 35,84 36,87 12,87 21,87 27,90 63,74 58,78 72,74 75,73 75,79 71,85 71,87 75,86 75,88 54,86 95,70 99,74 97,78 99,80 102,76 106,77 92,83 98,87 100,87 104,87 117,88 119,86 121,83 121,79 125,84 138,85 140,88 145,85 149,85 146,88 151,88 181,89 185,85 187,86 190,88 194,85 199,85 195,88 199,88 149,7 163,8 167,11 155,27 155,30 141,32 143,34 145,36 148,38 156,38 158,36 160,36 163,36 168,34 157,40 155,43 157,45 157,48 158,50 144,48 149,55 152,55 175,41 186,39 189,40"
  .split(" ")
  .map((p) => p.split(",").map(Number));

const hist = [
  { v: "0", h: 0, a: "0-", b: "0.1" },
  { v: "0.4", h: 9, a: "0.4-", b: "0.5" },
  { v: "1.181", h: 28, a: "1.1-", b: "1.2" },
  { v: "1.313", h: 32, a: "1.3-", b: "1.4" },
  { v: "1.642", h: 40, a: "1.6-", b: "1.7" },
  { v: "1.7", h: 42, a: "1.7-", b: "1.8" },
];

function Histogram() {
  return (
    <Win $x={981} $y={416} $w={483} $dark>
      <WinTitle $bg="radial-gradient(ellipse 110px 17px at 70px 14px, #6e7173 50%, transparent), linear-gradient(90deg, #555 0, #222 30%, #000 50%, #0a0a0a 59%, #a9bccb 63%, #c9d8e6 100%)">
        <TitleBlur width="190" height="28" viewBox="0 0 190 28">
          <defs><filter id="soft"><feGaussianBlur stdDeviation="2.500" /></filter></defs>
          <g filter="url(#soft)" fill="none" strokeWidth="5">
            <path d="M12 13L22 7L32 13" stroke="#d88" /><path d="M12 17H32" stroke="#77f" />
            <path d="M54 16L62 4L70 16" stroke="#d88" /><path d="M52 22L62 13L72 22" stroke="#88f" />
            <path d="M92 16Q100 -2 114 14" stroke="#d88" /><path d="M90 22Q102 8 117 22" stroke="#88f" />
            <path d="M132 14Q140 0 152 12" stroke="#d88" /><path d="M132 18H152" stroke="#88f" />
          </g>
        </TitleBlur>
        <XIcon w={16} />
        <h2>Results histogram</h2>
        <WinClose aria-label="Close histogram"><CloseX /></WinClose>
      </WinTitle>
      <HistPane>
        <HistTop>
          <HistSide>
            <Radios>
              {["Count", "Average", "Sum", "Min", "Max"].map((t) => (
                <Radio key={t}><input type="radio" name="measure" defaultChecked={t === "Min"} />{t}</Radio>
              ))}
            </Radios>
            <Scrolled $h={116}>
              <List $tone="cyan"><ListItem $tone="cyan" $on>Spacing</ListItem></List>
              <ScrollBar tone="cyan" v size="full" />
            </Scrolled>
            <SideButtons>
              <IconButton aria-label="Delete"><MiniIcon text="DEL" dot="#f00" /></IconButton>
              <IconButton aria-label="Refresh"><MiniIcon text="REF" dot="#0f0" /></IconButton>
            </SideButtons>
          </HistSide>
          <Chart>
            <ChartTitle>Size(Spacing) / Min(Spacing)</ChartTitle>
            <Bars>
              {hist.map((b) => (
                <BarCol key={b.v} $red={b.v === "0.4"}>
                  {b.v}
                  {b.h > 0 && <BarRect style={{ height: b.h }} />}
                </BarCol>
              ))}
            </Bars>
            <Ranges>{hist.map((b) => <Range key={b.a}>{`${b.a}\n ${b.b}`}</Range>)}</Ranges>
            <ScrollBar tone="cyan" size="132px" />
            <Lower>
              <LowerList>
                <List $tone="cyan">
                  <ListItem $tone="cyan" $on>Spacing</ListItem>
                  <ListItem $tone="cyan">SMD</ListItem>
                  <ListItem $tone="cyan">Clearance</ListItem>
                </List>
                <ScrollBar tone="cyan" v size="full" />
              </LowerList>
              <Resolution>
                Resolution
                <b>0.1</b>
                <input type="range" defaultValue={0} />
              </Resolution>
            </Lower>
          </Chart>
        </HistTop>
        <Sash />
        <MapPane>
          <MapBox>
            <svg width="207" height="130" viewBox="0 0 207 130" shapeRendering="crispEdges">
              {mapDots.map(([x, y], i) => <rect key={i} x={x} y={y} width="3" height="3" fill="#f0f" />)}
              <path d="M151.500 33V26.500H155M158 26.500H160.500V30" fill="none" stroke={blk} />
            </svg>
          </MapBox>
        </MapPane>
      </HistPane>
    </Win>
  );
}

/* ---------- input-method bar ---------- */
const Ime = styled.div`
  position: absolute;
  left: 1240px;
  top: 828px;
  width: 79px;
  height: 26px;
  border-top: 1px solid #ddd;
  background: linear-gradient(#b9bcc0, #55595f 50%, #3d4248);
`;

/* ---------- taskbar ---------- */
const Taskbar = styled.footer`
  flex: none;
  height: 40px;
  display: flex;
  align-items: flex-start;
  border-top: 1px solid #101010;
  background: linear-gradient(90deg, #05080b 0, #12181d 69%, #3e6d78 71%, #4d8088 82%, #31545e 84%, #3b6c76 90%, #4c8a93 100%);
`;
const Orb = styled.button`
  flex: none;
  width: 54px;
  height: 39px;
  margin-right: 6px;
  border: 0;
  background: none;
  display: grid;
  place-items: center;
`;
const Group = styled.div<{ $gap: number }>`
  flex: none;
  display: flex;
  gap: ${(p) => p.$gap}px;
  margin-right: 3px;
`;
const Task = styled.button<{ $w: number; $bg: string }>`
  width: ${(p) => p.$w}px;
  height: 38px;
  border: 1px solid rgba(205, 220, 225, 0.65);
  border-radius: 3px;
  background: ${(p) => p.$bg};
  display: grid;
  place-items: center;
`;
const Tray = styled.div`
  flex: none;
  margin-left: auto;
  display: flex;
  align-items: center;
  height: 39px;
  gap: 7px;
`;
const Time = styled.div`
  width: 76px;
  text-align: center;
  color: #fff;
  font: 12px/18px ${sans};
`;
const ShowDesk = styled.button`
  width: 12px;
  height: 39px;
  border: 1px solid #a6c8cc;
  background: linear-gradient(#8ebcc2, #3f6f78 50%, #5f9aa2);
`;
const lit = "linear-gradient(150deg, #a9c4d2 0, #6f8d9c 45%, #1f272c 60%, #34444c 100%)";
const dim = "linear-gradient(150deg, #a0a0a0 0, #55595c 45%, #1e2326 60%, #33393d 100%)";
const sea = "linear-gradient(150deg, #a3c6cc 0, #6f9ea6 50%, #4a7c87 100%)";

const pads: React.ReactNode[] = [
  <><path d="M16 3Q22 -1 24 6Q31 7 29 14Q32 22 22 25L19 28H12L10 25Q-1 22 2 14Q1 7 8 6Q9 0 16 3Z" fill="#f6c766" /><path d="M16 3V24M9 6L15 24M23 6L17 24M3 13L14 24" stroke="#fff1c4" strokeWidth="1.500" /><path d="M20 12L23 17L28 18L24 22L25 27L20 24L15 27L16 22L12 18L18 17Z" fill="#e67c1c" /></>,
  <><path d="M1 0H31V31H4L1 28Z" fill="#1648b8" /><path d="M9 0H24V11H9Z" fill="#ccd2dc" /><path d="M18 1H22V9H18Z" fill="#1648b8" /><path d="M4 14H28V30H4Z" fill="#fff" /><path d="M6 18.500H26M6 22.500H26M6 26.500H26" stroke="#b22" /></>,
  <><path d="M27 21A9.500 9.500 0 1 1 27.500 16H12" fill="none" stroke="#56c3f3" strokeWidth="5" /><path d="M29 2Q24 -1 13 8Q0 20 4 28Q8 30 12 26" fill="none" stroke="#f6c714" strokeWidth="2.500" /></>,
  <path d="M28 2L25 10L10 12V22H19V18H15V14H28L24 29H6L3 25V13L10 6L21 5Z" fill="#d8281c" stroke="#8d1510" />,
  <><path d="M6 3H24M6 3L2 26" stroke="#139a43" strokeWidth="2" /><path d="M18 7Q29 6 28 13Q27 20 17 20L15 29H9L13 7Z" fill="#0d9a3e" /><path d="M9 6H21L20 11H14L13 14H18L17 18H12L10 27H5Z" fill="#8ea69b" /></>,
  <><path d="M2 9V3H8M24 3H30V9M30 20V26H24M8 26H2V20" stroke="#4c93cf" strokeWidth="3" /><path d="M4 5H28V24H4Z" fill="#fff" /><path d="M5 6H27V14H5Z" fill="#5eaee8" /><path d="M5 14L14 11L27 14V19H5Z" fill="#2f7846" /><path d="M5 18H27V23H5Z" fill="#76b9dd" /></>,
  <><path d="M6 2H26L29 29H4Z" fill="#eef3fa" stroke="#54769e" /><path d="M6 2H26V6H6Z" fill="#5c88bd" /><text x="6" y="20" fontFamily="Liberation Serif" fontWeight="bold" fontSize="15" fill="#f07818">A</text><path d="M18 10H25M18 13H25M18 16H25M8 23H25M8 26H25" stroke="#5c7fb0" /></>,
  <><rect x="1" y="1" width="29" height="29" rx="3" fill="#0d52a8" /><path d="M11 6H28L26 11H15L14 15H23L22 19H13L11 26H5L7 19H3L5 15H8Z" fill="#fff" /></>,
  <><path d="M6 0H23Q32 8 28 16Q24 22 17 22L15 31H1Z" fill="#12903c" /><path d="M9 4H24L23 9H14L13 13H21L20 18H12L9 30H4Z" fill="#eaf6ea" /></>,
];
const Disc = () => (
  <svg width="32" height="27" viewBox="0 0 32 27">
    <path d="M1 2L5 0L11 1L12 6L2 7Z" fill="#17a9a9" />
    <ellipse cx="17" cy="15" rx="15" ry="10" fill="#3e4560" />
    <path d="M4 20Q18 29 30 18V22Q18 30 4 20Z" fill="#c8c8d4" />
    <ellipse cx="19" cy="14" rx="12" ry="9" fill="#1aa6a6" />
    <path d="M19 5V23M8 11L30 17M8 18L29 9" stroke="#0a6a74" />
    <ellipse cx="18" cy="13" rx="6" ry="4" fill="#0c6c84" stroke="#e8d84c" strokeWidth="1.500" />
    <ellipse cx="18" cy="12" rx="3" ry="2" fill="#6ee" />
  </svg>
);
const Doc = ({ k }: { k: "X" | "W" }) => {
  const col = k === "X" ? "#2c7d32" : "#2d5ca8";
  return (
    <svg width="30" height="30" viewBox="0 0 30 30">
      <path d="M6 1H24L29 7V29H6Z" fill="#eaf2fd" stroke="#7ba0cf" />
      <path d="M24 1V7H29" fill="#c5d9f3" stroke="#7ba0cf" />
      <path d={k === "X" ? "M10 12H26M10 16H26M10 20H26M14 9V24M19 9V24M23 9V24" : "M10 16H26M10 19H26M10 22H26M10 25H22M20 10H26M20 13H26"} stroke="#8fb0dc" />
      <path d="M.5 2.500H15.500V17.500H.5Z" fill="#e6f1e6" stroke={col} />
      <path d="M2 4H14V16H2Z" fill={col} />
      <text x="8" y="14" textAnchor="middle" fontFamily="Liberation Sans" fontWeight="bold" fontSize="12" fill="#fff">{k}</text>
    </svg>
  );
};

const Mn = ({ t, i = 0 }: { t: string; i?: number }) =>
  i < 0 ? <MenuItem>{t}</MenuItem> : <MenuItem>{t.slice(0, i)}<u>{t[i]}</u>{t.slice(i + 1)}</MenuItem>;

export default function App() {
  return (
    <Screen>
      <Global />
      <Desktop>
        <TitleBar>
          <TitleText><XIcon w={16} />Graphic Editor 9.07b2 (00@HY-HYCAM-PC072 - Windows, pid:4348)</TitleText>
          <CaptionButtons>
            <CaptionButton $w={28} aria-label="Minimize"><svg width="12" height="10"><path d="M.5 5.500H11.500V8.500H.5Z" fill="#fff" stroke="#556" /></svg></CaptionButton>
            <CaptionButton $w={27} aria-label="Restore"><svg width="12" height="12"><path d="M3.500.5H11.500V8.500H3.500Z" fill="#fff" stroke="#556" /><path d="M.5 3.500H8.500V11.500H.5Z" fill="#fff" stroke="#556" /><path d="M3.500 6.500H5.500V8.500H3.500Z" fill="#9bd" stroke="#556" /></svg></CaptionButton>
            <CaptionButton $w={47} aria-label="Close editor"><CloseX /></CaptionButton>
          </CaptionButtons>
        </TitleBar>
        <Header>
          <MenuBar>
            <Mn t="File" /><Mn t="Edit" /><Mn t="Actions" /><Mn t="Options" i={1} /><Mn t="Analysis" i={-1} /><Mn t="DFM" i={-1} />
            <Mn t="Step" /><Mn t="Rout" /><Mn t="Windows" /><Mn t="Help" i={-1} />
          </MenuBar>
          <Brand>
            <LogoBox>
              <svg width="20" height="24" viewBox="0 0 20 24">
                <path d="M5 2L22 0V3ZM3 8L20 6V10ZM0 14L18 12V16ZM0 21L18 18V22Z" fill="#f00" />
                <path d="M0 3H9M2 9H9M0 15H7M0 21H7" stroke="#f99" />
              </svg>
              <LogoText aria-label="Frontline">
                Fr
                <svg width="20" height="22" viewBox="0 0 20 22"><circle cx="10" cy="12" r="9" fill="#c9ecec" stroke="#00008b" /><path d="M10 8L14 12L10 16L6 12Z" fill="#f00" /></svg>
                ntline
              </LogoText>
            </LogoBox>
            <Product>Genesis 2000<small>Graphic Editor</small></Product>
            <Clock>27 Dec 2017<br />03:30 AM<Pause /></Clock>
          </Brand>
        </Header>
        <Body>
          <Side>
            <InfoBox>Job : 4s9wh006a0</InfoBox>
            <InfoBox>Step: cam</InfoBox>
            <MatrixFrame><WideButton>Job Matrix ...</WideButton></MatrixFrame>
            <LayerArea>
              <LayerFrame>
                <LayerList>
                  {layerGroups.map((g, i) => (
                    <LayerGroup key={i}>
                      {g.map((l) => (
                        <LayerRow key={l.n}>
                          <LayerCheck type="checkbox" $on={l.on} />
                          <Swatch $color={l.sw} />
                          <LayerName $bg={l.bg || c.cyan}>{l.n}<Marks>{l.hand && <Hand />}{l.grid && <GridMark />}</Marks></LayerName>
                        </LayerRow>
                      ))}
                    </LayerGroup>
                  ))}
                </LayerList>
              </LayerFrame>
              <ScrollBar tone="teal" v size="486px" />
            </LayerArea>
            <Selected>Selected : 0</Selected>
          </Side>
          <Board />
          <Tools>
            <ToolGrid>
              {topIcons.map((t, i) => (
                <ToolButton key={i} $tone="cyan" $hot={t.hot} aria-label={`View tool ${i + 1}`}><Icon30>{t.el}</Icon30></ToolButton>
              ))}
            </ToolGrid>
            <ToolGrid $grey>
              {editIcons.map((el, i) => (
                <ToolButton key={i} $tone={i < 4 ? "white" : "grey"} aria-label={`Edit tool ${i + 1}`}><Icon30>{el}</Icon30></ToolButton>
              ))}
            </ToolGrid>
          </Tools>
        </Body>
        <CoordStrip>
          <CoordCell><CoordButton aria-label="Measure"><svg width="19" height="19"><path d="M.5.5H18.500V18.500H.5ZM4 4L15 15M4 8V4H8M15 11V15H11" fill="none" stroke={blk} /></svg></CoordButton></CoordCell>
          <CoordCell><CoordButton aria-label="Angle"><svg width="19" height="19"><path d="M.5.5H18.500V18.500H.5ZM2 15H7L16 3M6 3V8H9M10 12H13V15H10ZM14 12H17M14 15H17" fill="none" stroke={blk} /></svg></CoordButton></CoordCell>
          <CoordCell $on><CoordButton aria-label="Grid"><svg width="19" height="19"><path d="M.5.5H18.500V18.500H.5ZM3.500 7L7 3.500H15.500V15.500H3.500ZM3 9.500H16M9.500 3V16" fill="none" stroke={blk} /></svg></CoordButton></CoordCell>
          <CoordText>X Y :</CoordText>
        </CoordStrip>
        <MessageStrip><Message>d -&gt; ts.d : 0.006</Message></MessageStrip>
        <ResultsViewer />
        <Histogram />
        <Ime>
          <svg width="79" height="25" viewBox="0 0 79 25">
            <path d="M4 5H13M4 9H13M4 13H13M4 17H13M4 21H13" stroke="#333" strokeWidth="1.500" strokeDasharray="1.500 1.500" />
            <rect x="19" y="5" width="14" height="14" fill="#e8501c" stroke="#fff" />
            <path d="M30 8.500H24Q22 10 24 12H28Q30 14 28 15.500H22" stroke="#fff" strokeWidth="2" fill="none" />
            <circle cx="49" cy="12" r="7" fill="#0a2ea8" stroke="#cdd" />
            <text x="49" y="16" textAnchor="middle" fontSize="11" fontWeight="bold" fontFamily="Liberation Sans" fill="#fff">?</text>
            <path d="M68 8H73" stroke="#fff" strokeWidth="2" /><path d="M68 16H74L71 19Z" fill="#fff" />
          </svg>
        </Ime>
      </Desktop>
      <Taskbar>
        <Orb aria-label="Start">
          <svg width="38" height="38" viewBox="0 0 38 38">
            <defs><radialGradient id="orb" cx=".5" cy=".9" r=".9"><stop offset="0" stopColor="#35d6ff" /><stop offset=".4" stopColor="#1470a8" /><stop offset=".75" stopColor="#1d4360" /><stop offset="1" stopColor="#a9c4d4" /></radialGradient></defs>
            <circle cx="19" cy="19" r="18" fill="url(#orb)" stroke="#7fa9bf" />
            <path d="M11 10Q15 8 18 10L16 18Q13 16 9 18Z" fill="#f0582a" /><path d="M20 11Q24 13 29 10L27 18Q22 20 18 18Z" fill="#8cc63c" />
            <path d="M9 20Q13 18 16 20L14 28Q10 26 7 28Z" fill="#3f9be8" /><path d="M18 20Q22 22 26 20L24 28Q19 30 16 28Z" fill="#fbc92a" />
          </svg>
        </Orb>
        <Group $gap={4}>
          {pads.map((el, i) => (
            <Task key={i} $w={i === 0 || i > 5 ? 52 : 53} $bg={i === 0 || i > 6 ? dim : lit} aria-label={`Application ${i + 1}`}><svg width="32" height="32" viewBox="0 0 32 32" fill="none">{el}</svg></Task>
          ))}
          <Task $w={52} $bg={dim} aria-label="Disc tool"><Disc /></Task>
        </Group>
        <Group $gap={0}>
          {[0, 1, 2, 3, 4, 5, 6].map((i) => (
            <Task key={i} $w={54} $bg={i === 3 ? "linear-gradient(150deg, #dcdcdc, #8b8b8b 55%, #9f9f9f)" : dim} aria-label={`X window ${i + 1}`}><XIcon /></Task>
          ))}
        </Group>
        <Group $gap={0}>
          <Task $w={53} $bg={sea} aria-label="Spreadsheet 1"><Doc k="X" /></Task>
          <Task $w={53} $bg={sea} aria-label="Spreadsheet 2"><Doc k="X" /></Task>
        </Group>
        <Group $gap={4}>
          <Task $w={52} $bg={sea} aria-label="Document"><Doc k="W" /></Task>
          <Task $w={52} $bg={sea} aria-label="Genesis"><Disc /></Task>
        </Group>
        <Tray>
          <svg width="8" height="5"><path d="M0 5L4 0L8 5Z" fill="#fff" /></svg>
          <svg width="18" height="16"><path d="M2 1H14L11 4L14 7H5L2 4Z" fill="#46a52c" /><path d="M5 8H14L17 11L14 14H5L8 11Z" fill="#2090d8" /></svg>
          <svg width="18" height="14"><path d="M0 13L11 0V9L6 13Z" fill="#f01010" /><path d="M11 3L17 13L11 9Z" fill="#18c828" /></svg>
          <svg width="17" height="16"><path d="M5 4.500H15.500V12.500H5ZM8 15H15M11 12V15" stroke="#fff" strokeWidth="1.500" fill="#345" /><path d="M2 0V4M5 0V4M1 4H6V7H4V13" stroke="#fff" fill="none" /></svg>
          <svg width="17" height="16"><path d="M6 1H17L14 5H4ZM4 6H15L12 10H8L6 16H2V10L0 9Z" fill="#1684f0" /></svg>
          <Time>3:54<br />2017/12/27</Time>
          <ShowDesk aria-label="Show desktop" />
        </Tray>
      </Taskbar>
    </Screen>
  );
}
